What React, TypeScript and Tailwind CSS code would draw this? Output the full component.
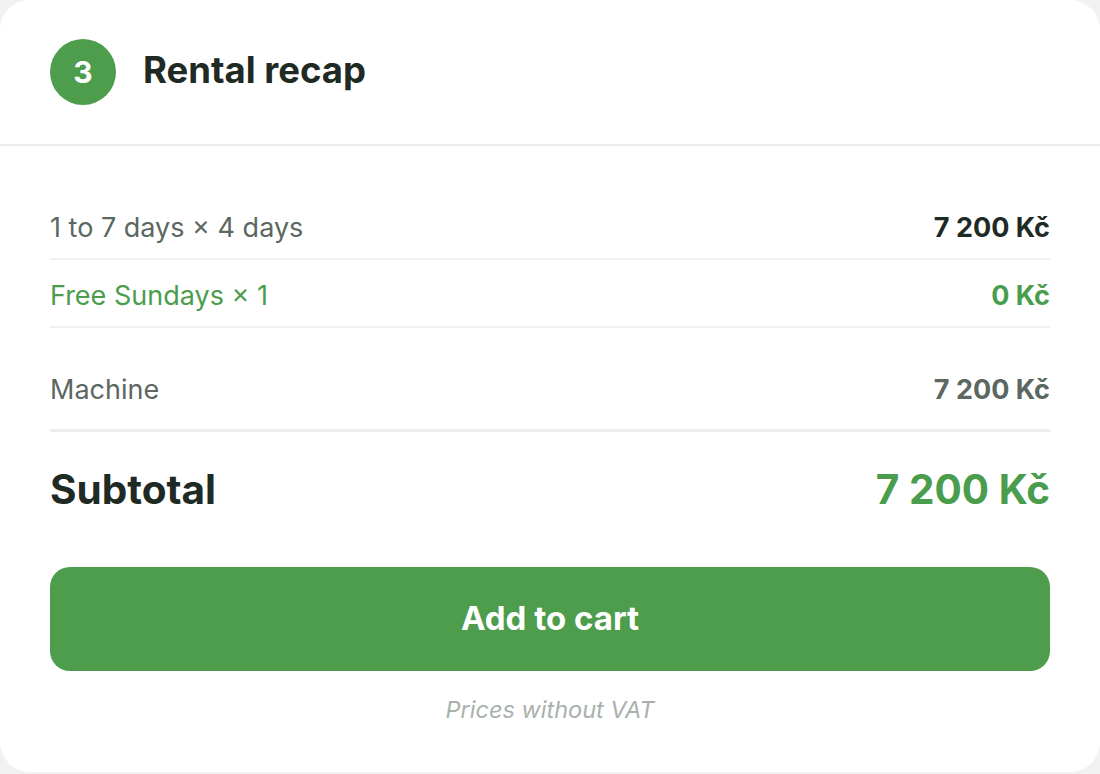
const rows = [
  { label: '1 to 7 days × 4 days', value: '7 200 Kč', tone: 'base' },
  { label: 'Free Sundays × 1', value: '0 Kč', tone: 'green' },
] as const

export default function App() {
  return (
    <div className="min-h-screen bg-[#f2f2f2] font-['Inter',sans-serif]">
      <div className="w-[1100px] h-[772px] bg-white rounded-[30px] overflow-hidden flex flex-col">
        {/* Header */}
        <div className="h-[146px] flex items-center gap-[27px] px-[50px] border-b-2 border-[#ececec]">
          <div className="w-[66px] h-[66px] rounded-full bg-[#4d9d4d] flex items-center justify-center text-white text-[30px] font-bold">
            3
          </div>
          <h2 className="text-[36.5px] leading-none font-bold text-[#1f2a24] -mt-[4px]">Rental recap</h2>
        </div>

        {/* Lines */}
        <div className="px-[50px] pt-[46px]">
          {rows.map((row) => (
            <div
              key={row.label}
              className={`h-[68px] pt-[4px] flex items-center justify-between border-b-2 border-[#f1f1f1] text-[27px] leading-none ${
                row.tone === 'green' ? 'text-[#4a9d4c]' : 'text-[#5b6760]'
              }`}
            >
              <span>{row.label}</span>
              <span className={`font-bold ${row.tone === 'green' ? 'text-[#4a9d4c]' : 'text-[#1f2a24]'}`}>
                {row.value}
              </span>
            </div>
          ))}
          <div className="h-[104px] pt-[22px] flex items-center justify-between border-b-[3px] border-[#ececec] text-[27px] leading-none text-[#5b6760]">
            <span>Machine</span>
            <span className="font-bold">7 200 Kč</span>
          </div>

          {/* Subtotal */}
          <div className="h-[112px] pt-[4px] flex items-center justify-between text-[40.5px] leading-none font-bold">
            <span className="text-[#1f2a24]">Subtotal</span>
            <span className="text-[#4a9d4c]">7 200 Kč</span>
          </div>

          <button className="mt-[23px] w-full h-[104px] rounded-[20px] bg-[#4d9d4d] text-white text-[33px] font-bold">
            Add to cart
          </button>
          <p className="mt-[21px] text-center text-[23.5px] italic text-[#a9b1ac]">Prices without VAT</p>
        </div>
      </div>
    </div>
  )
}
